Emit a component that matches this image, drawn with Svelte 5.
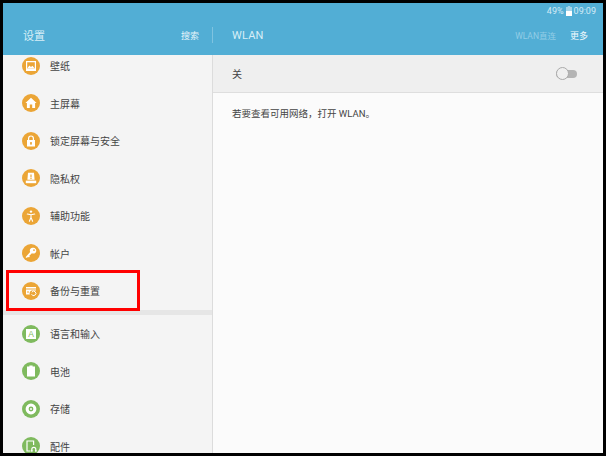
<script>
  const personal = [
    { label: '壁纸', icon: 'wallpaper' },
    { label: '主屏幕', icon: 'home' },
    { label: '锁定屏幕与安全', icon: 'lock' },
    { label: '隐私权', icon: 'privacy' },
    { label: '辅助功能', icon: 'access' },
    { label: '帐户', icon: 'key' },
    { label: '备份与重置', icon: 'backup' }
  ];
  const device = [
    { label: '语言和输入', icon: 'lang' },
    { label: '电池', icon: 'battery' },
    { label: '存储', icon: 'storage' },
    { label: '配件', icon: 'accessory' }
  ];
</script>

{#snippet glyph(name)}
  <svg viewBox="0 0 18 18" width="18" height="18">
    {#if name === 'wallpaper'}
      <path fill="#fff" fill-rule="evenodd" d="M4 4h10v10H4zM5.200 5.200v6.200h7.600V5.200z" />
      <path fill="#fff" d="M5.200 11.400l2.200-3 1.600 1.700 1.400-1.300 2.400 2.600z" />
    {:else if name === 'home'}
      <path fill="#fff" d="M9 3.800L14.600 9h-1.500v5h-2.900v-3.400H7.800V14H4.900V9H3.400z" />
    {:else if name === 'lock'}
      <path fill="#fff" fill-rule="evenodd" d="M5 8h1V6.400a3 3 0 0 1 6 0V8h1v6.500H5zM7.200 8h3.600V6.400a1.800 1.800 0 0 0-3.600 0zM9 10a1 1 0 0 0-.5 1.900v1h1v-1A1 1 0 0 0 9 10z" />
    {:else if name === 'privacy'}
      <path fill="#fff" fill-rule="evenodd" d="M6 3.800h6l.6 7H5.400zM8.400 5.500v3h1.200v-3zM8.400 9v1h1.200V9z" />
      <path fill="#fff" d="M3.800 11.600h10.400v2.600H3.800z" />
    {:else if name === 'access'}
      <circle cx="9" cy="4.600" r="1.200" fill="#fff" />
      <path fill="none" stroke="#fff" stroke-width="1.100" stroke-linecap="round" stroke-linejoin="round" d="M5.300 7l3.700.8 3.700-.8M9 7.800v2.600M9 10.400l-1.600 3.800M9 10.400l1.600 3.800" />
    {:else if name === 'key'}
      <path fill="#fff" fill-rule="evenodd" d="M11.400 3.800a2.900 2.900 0 1 1-1.500 5.400L5.800 13.300l-.9.100-.9.600-.3-1 4.500-5A2.900 2.900 0 0 1 11.400 3.800zM12 5.200a.9.900 0 1 0 0 1.800.9.900 0 0 0 0-1.800z" />
      <path fill="#fff" d="M6.500 11.200l1.400 1.400-1 1-1.400-1.400z" />
    {:else if name === 'backup'}
      <path fill="#fff" d="M4 5h10v1.600H4zM4 7.400h10v1.100H9.500a3.300 3.300 0 0 0-1.700 4H4z" />
      <path fill="none" stroke="#fff" stroke-width="1" d="M9.800 10.200a2.200 2.200 0 1 1-.2 2" />
      <path fill="#eba536" d="M5 9.400h2v1H5z" />
    {:else if name === 'lang'}
      <path fill="#fff" d="M4 4h10v10H4z" />
      <text x="9" y="12.400" text-anchor="middle" class="letter">A</text>
    {:else if name === 'battery'}
      <path fill="#fff" d="M7.400 3.400h3.200v1H13v10.200H5V4.400h2.400z" />
    {:else if name === 'storage'}
      <path fill="#fff" fill-rule="evenodd" d="M9 3.600a5.400 5.400 0 1 1 0 10.800A5.400 5.400 0 0 1 9 3.600zM9 6.600a2.400 2.400 0 1 0 0 4.800 2.400 2.400 0 0 0 0-4.800z" />
      <circle cx="9" cy="9" r="1" fill="#fff" />
    {:else if name === 'accessory'}
      <path fill="none" stroke="#fff" stroke-width="1.200" d="M8.500 14H5V4h6.600v4" />
      <path fill="none" stroke="#fff" stroke-width="1.200" d="M9.800 14.400v-2a2 2 0 0 1 4 0v2" />
      <path fill="#fff" d="M9 13.200h1.600v1.400H9zM13 13.200h1.600v1.400H13z" />
    {/if}
  </svg>
{/snippet}

{#snippet row(item, tone)}
  <li class="row">
    <span class="badge {tone}">{@render glyph(item.icon)}</span>
    <span class="label">{item.label}</span>
  </li>
{/snippet}

<div class="frame">
  <div class="screen">
    <header>
      <div class="status">
        <span>49%</span>
        <svg class="batt" viewBox="0 0 6 10" width="6" height="10">
          <path fill="#a5d4e9" d="M1.800 0h2.400v1H6v9H0V1h1.800z" />
          <path fill="#fff" d="M0 5h6v5H0z" />
        </svg>
        <span>09:09</span>
      </div>
      <div class="bar">
        <div class="bar-left">
          <span class="title">设置</span>
          <span class="search">搜索</span>
          <span class="rule"></span>
        </div>
        <div class="bar-right">
          <span class="title">WLAN</span>
          <span class="actions">
            <span class="direct">WLAN直连</span>
            <span class="more">更多</span>
          </span>
        </div>
      </div>
    </header>

    <div class="body">
      <nav>
        <ul>
          {#each personal as item}
            {@render row(item, 'orange')}
          {/each}
        </ul>
        <div class="gap"></div>
        <ul>
          {#each device as item}
            {@render row(item, 'green')}
          {/each}
        </ul>
      </nav>

      <main>
        <div class="switch-row">
          <span>关</span>
          <span class="toggle"><span class="knob"></span></span>
        </div>
        <p>若要查看可用网络，打开 WLAN。</p>
      </main>
    </div>
  </div>

  <div class="highlight"></div>
</div>

<style>
  :global(body) {
    margin: 0;
    background: #000;
  }

  .frame {
    position: relative;
    width: 606px;
    height: 456px;
    padding: 3px;
    box-sizing: border-box;
    background: #000;
    font-family: "Roboto", "Noto Sans CJK SC", sans-serif;
  }

  .screen {
    display: flex;
    flex-direction: column;
    height: 100%;
    overflow: hidden;
  }

  header {
    flex: none;
    height: 52px;
    background: #52aed5;
    color: #fff;
  }

  .status {
    display: flex;
    justify-content: flex-end;
    align-items: center;
    gap: 2px;
    height: 16px;
    padding-right: 7px;
    font-size: 9px;
    color: #d4ebf5;
  }

  .bar {
    display: flex;
    height: 36px;
  }

  .bar-left {
    display: flex;
    flex: none;
    align-items: center;
    box-sizing: border-box;
    width: 210px;
    height: 32px;
    padding-left: 20px;
  }

  .search {
    margin-left: auto;
    margin-right: 13px;
    font-size: 9px;
    color: #e6f4fa;
  }

  .rule {
    width: 1px;
    height: 16px;
    background: #7fc3e0;
  }

  .bar-right {
    display: flex;
    flex: 1;
    justify-content: space-between;
    align-items: center;
    height: 32px;
    padding: 0 15px 0 19px;
  }

  .title {
    font-size: 11px;
    color: #d8eef7;
  }

  .bar-right .title {
    letter-spacing: 0.2px;
  }

  .actions {
    display: flex;
    align-items: center;
    gap: 14px;
    font-size: 9px;
  }

  .direct {
    font-size: 8.5px;
    color: #92cde6;
  }

  .more {
    color: #f2fafd;
  }

  .body {
    display: flex;
    flex: 1;
    min-height: 0;
  }

  nav {
    flex: none;
    box-sizing: border-box;
    width: 210px;
    overflow: hidden;
    background: #f4f4f4;
    border-right: 1px solid #dcdcdc;
  }

  nav ul {
    margin: 0;
    padding: 0;
    list-style: none;
  }

  nav ul:first-child {
    margin-top: -8px;
  }

  .row {
    display: flex;
    align-items: center;
    gap: 10px;
    height: 37.5px;
    padding-left: 19px;
  }

  .badge {
    display: flex;
    justify-content: center;
    align-items: center;
    width: 18px;
    height: 18px;
    border-radius: 50%;
  }

  .orange {
    background: #eba536;
  }

  .green {
    background: #7fba5e;
  }

  .letter {
    font-family: "Liberation Sans", sans-serif;
    font-size: 8.5px;
    fill: #7fba5e;
  }

  .label {
    font-size: 10px;
    color: #444;
  }

  .gap {
    height: 5.5px;
    background: #e6e6e6;
  }

  main {
    flex: 1;
    background: #fbfbfb;
  }

  .switch-row {
    display: flex;
    justify-content: space-between;
    align-items: center;
    box-sizing: border-box;
    height: 38px;
    padding: 0 26px 0 19px;
    background: #efefef;
    border-bottom: 1px solid #dedede;
    font-size: 10px;
    color: #444;
  }

  .toggle {
    position: relative;
    width: 21px;
    height: 8px;
    border-radius: 4px;
    background: #b4b4b4;
  }

  .knob {
    position: absolute;
    top: -3px;
    left: 0;
    box-sizing: border-box;
    width: 13px;
    height: 13px;
    border-radius: 50%;
    background: #efefef;
    border: 1px solid #aaa;
  }

  p {
    margin: 0;
    padding: 14px 19px;
    font-size: 9.5px;
    line-height: 14px;
    color: #444;
  }

  .highlight {
    position: absolute;
    top: 270px;
    left: 6px;
    box-sizing: border-box;
    width: 134px;
    height: 41px;
    border: 3px solid #f00;
  }
</style>
